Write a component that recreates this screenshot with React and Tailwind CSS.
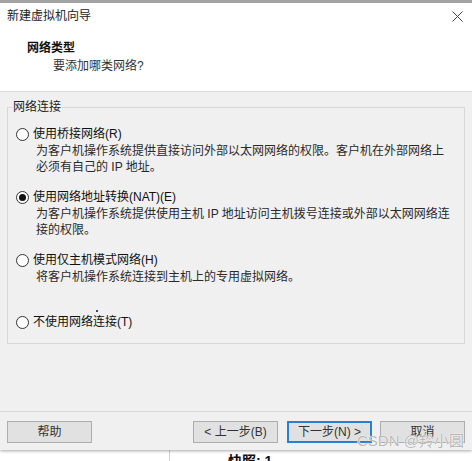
function Radio({ checked }) {
  return (
    <span className="w-[13px] h-[13px] rounded-full border border-[#333333] bg-white flex items-center justify-center shrink-0">
      {checked && <span className="w-[7px] h-[7px] rounded-full bg-[#111111]" />}
    </span>
  );
}

function Option({ checked, label, desc, className = "", dot = false }) {
  return (
    <div className={"relative " + className}>
      <div className="flex items-center gap-[4px] h-[16px]">
        <Radio checked={checked} />
        <span className="text-[#111111]">{label}</span>
      </div>
      {desc && (
        <div className="pl-[20px] mt-[1px] text-[#2a2a2a]">
          {desc.map((d, i) => (
            <div key={i}>{d}</div>
          ))}
        </div>
      )}
      {dot && <span className="absolute left-[80px] top-[-4px] w-[2px] h-[2px] bg-[#3a3ad0]" />}
    </div>
  );
}

function Btn({ children, primary = false, className = "" }) {
  return (
    <div
      className={
        "w-[85px] h-[22px] flex items-center justify-center bg-[#e1e1e1] text-[#333333] " +
        (primary ? "border-2 border-[#2a7fd4] " : "border border-[#adadad] ") +
        className
      }
    >
      {children}
    </div>
  );
}

export default function App() {
  return (
    <div className="w-[472px] h-[461px] bg-white relative overflow-hidden text-[12px] leading-[16px] font-['Liberation_Sans','Noto_Sans_CJK_SC',sans-serif]">
      <div className="relative z-10 h-[450px] flex flex-col bg-[#f0f0f0] shadow-[0_1px_3px_rgba(0,0,0,0.35)]">
        <div className="h-[3px] bg-[#a3a3a3] shrink-0" />
        <div className="h-[89px] bg-white border-b border-[#d9d9d9] shrink-0">
          <div className="h-[26px] flex items-center justify-between pl-[7px] pr-[9px]">
            <span className="text-[#222222]">新建虚拟机向导</span>
            <svg width="11" height="11" viewBox="0 0 11 11" className="mt-[1px]">
              <path d="M0.5 0.5 L10.5 10.5 M10.5 0.5 L0.5 10.5" stroke="#444444" strokeWidth="1" fill="none" />
            </svg>
          </div>
          <div className="pl-[27px] pt-[11px]">
            <div className="font-bold text-[#111111]">网络类型</div>
            <div className="pl-[26px] mt-[2px] text-[#333333]">要添加哪类网络?</div>
          </div>
        </div>
        <div className="flex-1 flex flex-col">
          <fieldset className="mx-[7px] mt-[7px] border border-[#d8d8d8] px-[4px] pb-[13px]">
            <legend className="px-[1px] text-[#222222]">网络连接</legend>
            <div className="pl-[4px] pt-[11px] flex flex-col">
              <Option
                label="使用桥接网络(R)"
                desc={["为客户机操作系统提供直接访问外部以太网网络的权限。客户机在外部网络上", "必须有自己的 IP 地址。"]}
              />
              <Option
                className="mt-[14px]"
                checked
                label="使用网络地址转换(NAT)(E)"
                desc={["为客户机操作系统提供使用主机 IP 地址访问主机拨号连接或外部以太网网络连", "接的权限。"]}
              />
              <Option
                className="mt-[14px]"
                label="使用仅主机模式网络(H)"
                desc={["将客户机操作系统连接到主机上的专用虚拟网络。"]}
              />
              <Option className="mt-[29px]" label="不使用网络连接(T)" dot />
            </div>
          </fieldset>
          <div className="mt-auto border-t border-[#d9d9d9] pt-[9px] pb-[7px] px-[7px] flex items-center">
            <Btn>帮助</Btn>
            <Btn className="ml-auto">&lt; 上一步(B)</Btn>
            <Btn primary className="ml-[9px]">下一步(N) &gt;</Btn>
            <Btn className="ml-[8px]">取消</Btn>
          </div>
        </div>
      </div>
      <div className="flex h-[11px]">
        <div className="ml-[169px] w-[1px] bg-[#d0d0d0]" />
        <div className="ml-[58px] mt-[3px] font-bold text-[14px] leading-[16px] text-[#111111]">快照: 1</div>
      </div>
      <div className="absolute z-20 left-[357px] top-[431px] text-[15px] leading-[20px] text-[#b8b8b8] [text-shadow:0_0_1px_#ffffff,0_0_1px_#ffffff] font-['Liberation_Sans','Noto_Sans_CJK_SC',sans-serif]">
        CSDN @羚小圆
      </div>
    </div>
  );
}
